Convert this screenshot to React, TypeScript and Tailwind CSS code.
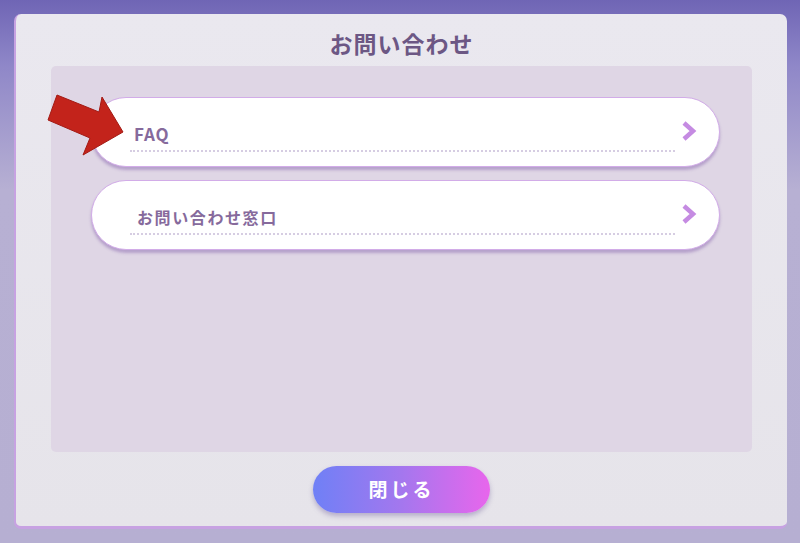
import React from "react";

const jp = { fontFamily: '"Noto Sans CJK JP", "Noto Sans", sans-serif' };

const Chevron = () => (
  <svg width="16" height="22" viewBox="0 0 16 22" className="shrink-0">
    <polyline
      points="3,3 12,11 3,19"
      fill="none"
      stroke="#c58be2"
      strokeWidth="4.5"
      strokeLinejoin="miter"
    />
  </svg>
);

const MenuButton = ({ label, wide }: { label: string; wide?: boolean }) => (
  <button className="relative flex h-[70px] w-[629px] items-center rounded-full border border-[#d2ace8] bg-white shadow-[0_3px_3px_rgba(130,95,170,0.45)]">
    <div className="ml-[38px] flex h-full flex-1 flex-col justify-center">
      <span
        className={`pt-[9px] text-left font-bold leading-[24px] text-[#866a9c] ${
          wide ? "pl-[7px] text-[16px] tracking-[1.6px]" : "pl-[4px] text-[17px] tracking-[0.8px]"
        }`}
        style={jp}
      >
        {label}
      </span>
      <div className="mt-[4px] w-[545px] border-b-2 border-dotted border-[#d6cde2]" />
    </div>
    <div className="mr-[23px] ml-[6px] -mt-[2px]">
      <Chevron />
    </div>
  </button>
);

export default function App() {
  return (
    <div className="relative h-[543px] w-[800px] overflow-hidden bg-[linear-gradient(180deg,#6f65b5_0%,#8f87c8_12%,#b7b0d3_35%,#b6afd2_100%)]">
      <div className="pl-[14px] pr-[13px] pt-[14px] pb-[14px]">
        <div className="flex h-[515px] flex-col items-center rounded-[7px] border-b-[3px] border-l-2 border-[#c7a2e2] border-t-0 border-r-0 bg-[linear-gradient(180deg,#eae8ef,#e6e4ea)]">
          <h1
            className="mt-[13px] text-[23px] font-bold leading-[32px] tracking-[1px] text-[#6c5784]"
            style={jp}
          >
            お問い合わせ
          </h1>
          <div className="mt-[7px] flex h-[386px] w-[701px] flex-col gap-[13px] rounded-[5px] bg-[#dfd6e5] pl-[40px] pt-[31px]">
            <MenuButton label="FAQ" />
            <MenuButton label="お問い合わせ窓口" wide />
          </div>
          <button
            className="mt-[14px] h-[47px] w-[177px] rounded-full bg-[linear-gradient(90deg,#6f80f6,#a477ee_50%,#e866ec)] text-[19px] font-bold tracking-[3px] text-white shadow-[0_3px_5px_rgba(90,70,140,0.35)]"
            style={jp}
          >
            閉じる
          </button>
        </div>
      </div>
      <svg
        className="absolute left-0 top-0"
        width="140"
        height="170"
        viewBox="0 0 140 170"
      >
        <polygon
          points="57,95 99,112 102,97 123,132 83,155 90,138 48,120"
          fill="#c3231b"
          stroke="#a31a14"
          strokeWidth="1"
          strokeLinejoin="round"
        />
      </svg>
    </div>
  );
}
